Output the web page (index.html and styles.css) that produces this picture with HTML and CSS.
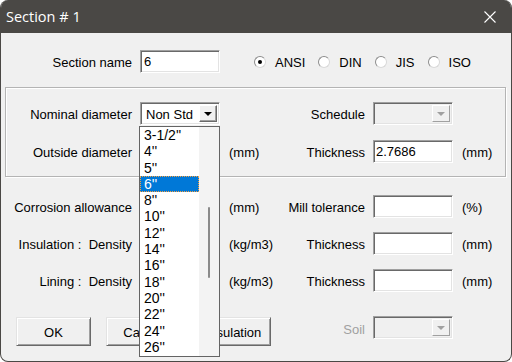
FILE: index.html
```html
<!DOCTYPE html>
<html lang="en">
<head>
    <meta charset="UTF-8">
    <meta name="viewport" content="width=device-width, initial-scale=1.0">
    <title>Section # 1</title>
    <link rel="stylesheet" href="styles.css">
</head>
<body>
    <div class="window">
        <!-- Title bar -->
        <div class="titlebar">
            <span class="title">Section # 1</span>
            <svg class="close" width="12" height="12" viewBox="0 0 12 12">
                <path d="M0.5 0.5 L11.5 11.5 M11.5 0.5 L0.5 11.5" stroke="#ffffff" stroke-width="1.1" fill="none"/>
            </svg>
        </div>

        <div class="content">
            <!-- Section name + standard -->
            <div class="row row-name">
                <span class="lbl">Section name</span>
                <div class="edit">6</div>
                <div class="radios">
                    <span class="radio-item"><span class="radio checked"></span>ANSI</span>
                    <span class="radio-item"><span class="radio"></span>DIN</span>
                    <span class="radio-item"><span class="radio"></span>JIS</span>
                    <span class="radio-item"><span class="radio"></span>ISO</span>
                </div>
            </div>

            <!-- Pipe dimensions -->
            <div class="group">
                <div class="row">
                    <span class="lbl">Nominal diameter</span>
                    <div class="combo">
                        <span class="combo-text">Non Std</span>
                        <span class="combo-btn"><span class="arrow"></span></span>
                        <div class="dropdown">
                            <ul class="dropdown-items">
                                <li>3-1/2''</li>
                                <li>4''</li>
                                <li>5''</li>
                                <li class="selected">6''</li>
                                <li>8''</li>
                                <li>10''</li>
                                <li>12''</li>
                                <li>14''</li>
                                <li>16''</li>
                                <li>18''</li>
                                <li>20''</li>
                                <li>22''</li>
                                <li>24''</li>
                                <li>26''</li>
                            </ul>
                            <div class="scroll-track"><div class="scroll-thumb"></div></div>
                        </div>
                    </div>
                    <span class="unit"></span>
                    <span class="rlbl">Schedule</span>
                    <div class="combo disabled">
                        <span class="combo-text"></span>
                        <span class="combo-btn"><span class="arrow"></span></span>
                    </div>
                </div>
                <div class="row row-gap">
                    <span class="lbl">Outside diameter</span>
                    <div class="edit"></div>
                    <span class="unit">(mm)</span>
                    <span class="rlbl">Thickness</span>
                    <div class="edit edit-num">2.7686</div>
                    <span class="unit">(mm)</span>
                </div>
            </div>

            <div class="row row-corrosion">
                <span class="lbl">Corrosion allowance</span>
                <div class="edit"></div>
                <span class="unit">(mm)</span>
                <span class="rlbl">Mill tolerance</span>
                <div class="edit"></div>
                <span class="unit">(%)</span>
            </div>

            <div class="row row-next">
                <span class="lbl">Insulation :&nbsp; Density</span>
                <div class="edit"></div>
                <span class="unit">(kg/m3)</span>
                <span class="rlbl">Thickness</span>
                <div class="edit"></div>
                <span class="unit">(mm)</span>
            </div>

            <div class="row row-next">
                <span class="lbl">Lining :&nbsp; Density</span>
                <div class="edit"></div>
                <span class="unit">(kg/m3)</span>
                <span class="rlbl">Thickness</span>
                <div class="edit"></div>
                <span class="unit">(mm)</span>
            </div>

            <!-- Buttons -->
            <div class="row row-buttons">
                <div class="buttons">
                    <div class="btn">OK</div>
                    <div class="btn">Cancel</div>
                    <div class="btn">Insulation</div>
                </div>
                <span class="rlbl rlbl-disabled">Soil</span>
                <div class="combo disabled">
                    <span class="combo-text"></span>
                    <span class="combo-btn"><span class="arrow"></span></span>
                </div>
            </div>
        </div>
    </div>
</body>
</html>
```

FILE: styles.css
```css
/* Classic dialog palette */
:root {
    --face: #f0f0f0;
    --light: #e3e3e3;
    --shadow: #a0a0a0;
    --dark-shadow: #696969;
    --title-bg: #4a4845;
    --highlight: #0078d7;
    --col-first: 131px;
}

* {
    margin: 0;
    padding: 0;
    box-sizing: border-box;
}

body {
    background: #ffffff;
    font-family: 'Liberation Sans', Arial, sans-serif;
    font-size: 13px;
    color: #000000;
}

.window {
    width: 512px;
    height: 362px;
    background: var(--face);
    border: 1px solid var(--title-bg);
    border-top: none;
    border-radius: 8px;
    overflow: hidden;
}

.titlebar {
    height: 33px;
    background: var(--title-bg);
    display: flex;
    align-items: center;
    justify-content: space-between;
    padding: 0 15px 0 5px;
}

.title {
    font-family: 'Open Sans', 'Noto Sans', sans-serif;
    font-size: 14.5px;
    color: #ffffff;
}

.close {
    display: block;
    margin-top: 1px;
}

/* Rows share one column grid so fields line up */
.row {
    display: grid;
    grid-template-columns: var(--col-first) 88px 66px 79px 88px 1fr;
    align-items: center;
    white-space: nowrap;
}

.lbl,
.rlbl,
.unit {
    padding-top: 2px;
}

.lbl {
    text-align: right;
}

.rlbl {
    text-align: right;
}

.rlbl-disabled {
    color: #a0a0a0;
}

.unit {
    padding-left: 9px;
}

.row-name {
    margin-top: 17px;
}

.edit {
    justify-self: end;
    width: 80px;
    height: 23px;
    background: #ffffff;
    border: 1px solid;
    border-color: var(--shadow) #ffffff #ffffff var(--shadow);
    box-shadow: inset 1px 1px 0 var(--dark-shadow), inset -1px -1px 0 var(--light);
    padding-left: 3px;
    line-height: 22px;
}

.edit-num {
    padding-left: 2px;
}

/* Radio buttons */
.radios {
    grid-column: 3 / -1;
    display: flex;
    align-items: center;
    padding-left: 34px;
    padding-top: 2px;
}

.radio-item {
    display: flex;
    align-items: center;
    gap: 9px;
    margin-right: 13px;
}

.radio {
    width: 12px;
    height: 12px;
    margin-top: -1px;
    border-radius: 50%;
    background: #ffffff;
    border: 1px solid;
    border-color: #8c8c8c #d8d8d8 #d8d8d8 #8c8c8c;
    display: flex;
    align-items: center;
    justify-content: center;
}

.radio.checked::after {
    content: '';
    width: 4px;
    height: 4px;
    border-radius: 50%;
    background: #000000;
}

/* Group box */
.group {
    --col-first: 126px;
    margin: 14px 5px 0 4px;
    padding: 14px 0 13px;
    border: 1px solid #b4b4b4;
    box-shadow: inset 1px 1px 0 #ffffff, 1px 1px 0 #ffffff;
}

.row-gap {
    margin-top: 15px;
}

.row-corrosion {
    margin-top: 18px;
}

.row-next {
    margin-top: 14px;
}

/* Combo boxes */
.combo {
    position: relative;
    justify-self: end;
    width: 80px;
    height: 23px;
    display: flex;
    align-items: center;
    background: #ffffff;
    border: 1px solid;
    border-color: var(--shadow) #ffffff #ffffff var(--shadow);
    box-shadow: inset 1px 1px 0 var(--dark-shadow), inset -1px -1px 0 var(--light);
}

.combo-text {
    flex: 1;
    padding-left: 5px;
    padding-top: 1px;
    line-height: 21px;
}

.combo-btn {
    width: 18px;
    height: 17px;
    margin-right: 2px;
    background: var(--face);
    border: 1px solid;
    border-color: #ffffff var(--dark-shadow) var(--dark-shadow) #ffffff;
    box-shadow: inset -1px -1px 0 var(--shadow);
    display: flex;
    align-items: center;
    justify-content: center;
}

.arrow {
    width: 0;
    height: 0;
    border-left: 4px solid transparent;
    border-right: 4px solid transparent;
    border-top: 4px solid #000000;
    margin-top: 1px;
}

.combo.disabled {
    background: var(--face);
}

.combo.disabled .combo-btn {
    border-color: #ffffff var(--shadow) var(--shadow) #ffffff;
    box-shadow: none;
}

.combo.disabled .arrow {
    border-top-color: var(--shadow);
}

/* Open drop-down list */
.dropdown {
    position: absolute;
    top: 23px;
    left: -2px;
    width: 81px;
    height: 231px;
    z-index: 10;
    display: flex;
    background: #ffffff;
    border: 1px solid #646464;
    overflow: hidden;
}

.dropdown-items {
    flex: 1;
    list-style: none;
    font-size: 14px;
}

.dropdown-items li {
    height: 16.3px;
    line-height: 17px;
    padding-left: 4px;
}

.dropdown-items li.selected {
    background: var(--highlight);
    color: #ffffff;
    outline: 1px dotted #f5a040;
    outline-offset: -1px;
}

.scroll-track {
    width: 20px;
    background: #f3f3f3;
}

.scroll-thumb {
    width: 2px;
    height: 71px;
    margin: 80px 0 0 9px;
    background: #8a8a8a;
    border-radius: 1px;
}

/* Button row */
.row-buttons {
    margin-top: 24px;
    align-items: start;
}

.row-buttons .rlbl {
    line-height: 23px;
}

.buttons {
    grid-column: 1 / 4;
    display: flex;
    gap: 15px;
    padding-left: 15px;
    margin-top: 1px;
}

.btn {
    width: 75px;
    height: 29px;
    display: flex;
    align-items: center;
    justify-content: center;
    padding-top: 1px;
    background: var(--face);
    border: 1px solid;
    border-color: var(--light) var(--dark-shadow) var(--dark-shadow) var(--light);
    box-shadow: inset 1px 1px 0 #ffffff, inset -1px -1px 0 var(--shadow);
}
```
